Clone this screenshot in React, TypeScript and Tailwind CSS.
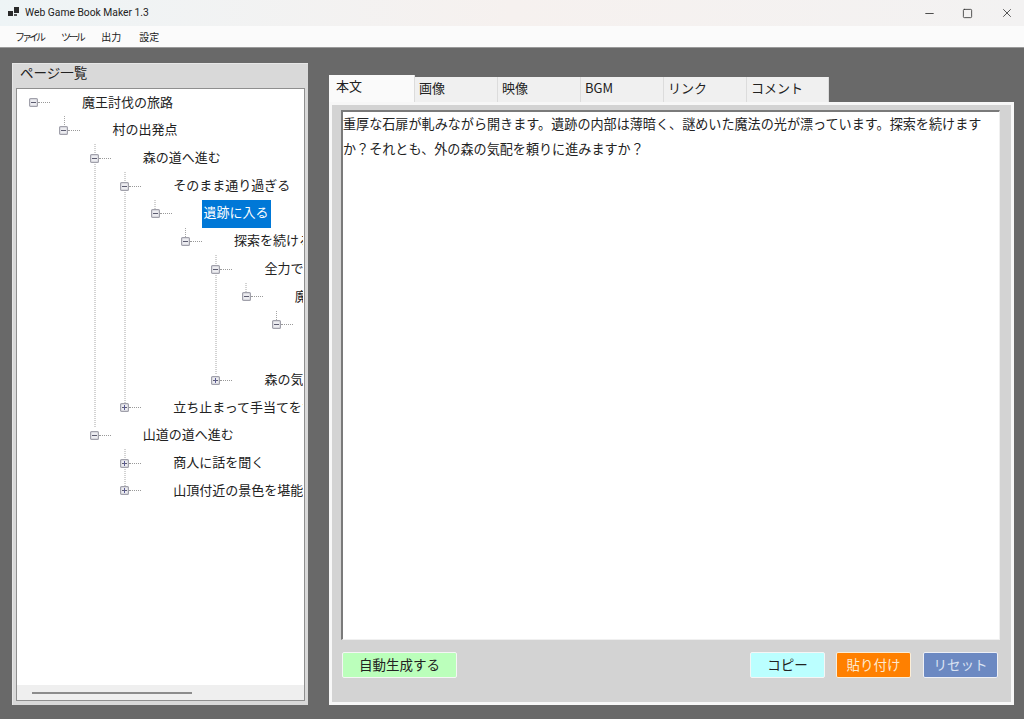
import { Minus, Square, X } from "lucide-react";

const nodes = [
  { level: 0, label: "魔王討伐の旅路", open: true },
  { level: 1, label: "村の出発点", open: true },
  { level: 2, label: "森の道へ進む", open: true },
  { level: 3, label: "そのまま通り過ぎる", open: true },
  { level: 4, label: "遺跡に入る", open: true, selected: true },
  { level: 5, label: "探索を続ける", open: true },
  { level: 6, label: "全力で走る", open: true },
  { level: 7, label: "魔法の扉", open: true },
  { level: 8, label: "", open: true },
  { level: 9, label: "", open: false, leaf: true },
  { level: 6, label: "森の気配を頼る", open: false },
  { level: 3, label: "立ち止まって手当てをする", open: false },
  { level: 2, label: "山道の道へ進む", open: true },
  { level: 3, label: "商人に話を聞く", open: false },
  { level: 3, label: "山頂付近の景色を堪能する", open: false },
];

// tree connector segments: x, y1, y2 relative to the tree box
const guides = [
  [47.5, 27, 37],
  [78, 55, 338],
  [108, 83, 315],
  [138, 111, 121],
  [168.5, 139, 149],
  [199, 166, 286],
  [229, 194, 203],
  [259.5, 222, 232],
  [108, 360, 398],
];

const tabs = ["本文", "画像", "映像", "BGM", "リンク", "コメント"];

function Expander({ open }: { open: boolean }) {
  return (
    <svg width="9" height="9" viewBox="0 0 9 9" className="-ml-px shrink-0">
      <rect x="0.6" y="0.6" width="7.8" height="7.8" rx="1" fill="#ececf0" stroke="#a0a0aa" strokeWidth="1.2" />
      <path d="M2 4.5h5" stroke="#5c5c70" />
      {!open && <path d="M4.5 2v5" stroke="#5c5c98" />}
    </svg>
  );
}

function TreeRow({ level, label, open, selected, leaf }: { level: number; label: string; open: boolean; selected?: boolean; leaf?: boolean }) {
  return (
    <div className="flex h-[27.73px] items-center whitespace-nowrap" style={{ paddingLeft: 13 + level * 30.4 }}>
      {!leaf && <Expander open={open} />}
      {!leaf && <div className="w-3 shrink-0 border-t border-dotted border-[#999]" />}
      <div className={`ml-[30px] flex h-full items-center px-[2px] pb-[3px] ${selected ? "bg-[#0078d7] text-white" : "text-[#222]"}`}>{label}</div>
    </div>
  );
}

function ActionButton({ label, className }: { label: string; className: string }) {
  return <button className={`h-[26px] rounded-[2px] border-[1.5px] pb-[2px] text-[13.5px] ${className}`}>{label}</button>;
}

export default function App() {
  return (
    <div className="flex h-[719px] w-[1024px] flex-col overflow-hidden bg-[#696969] font-['Noto_Sans_CJK_JP','Noto_Sans',sans-serif]">
      <div className="flex h-[26px] items-center bg-gradient-to-r from-[#eef4f6] via-[#f6f1ef] to-[#f3f2f2] pl-[8px]">
        <svg width="11" height="10" viewBox="0 0 11 10" className="mr-[6px] mb-[2px]">
          <path d="M0 4h5v5H0zM6 0h5v6H6z" fill="#2a2a2a" />
          <path d="M6 7h3v2H6z" fill="#555" />
        </svg>
        <span className="font-['Roboto',sans-serif] text-[10.3px] text-[#222]">Web Game Book Maker 1.3</span>
        <div className="ml-auto flex items-center text-[#333]">
          <Minus size={13} strokeWidth={1.6} className="mr-[26px]" />
          <Square size={11} strokeWidth={1.8} className="mr-[27.5px]" />
          <X size={14} strokeWidth={1.4} className="mr-[10px]" />
        </div>
      </div>
      <div className="flex h-[22px] items-center gap-[18px] border-b border-[#9a9a9a] bg-[#fbfbfb] pl-[15px] text-[10px] text-[#222]">
        <span className="tracking-[-3px]">ファイル</span>
        <span className="tracking-[-2.6px]">ツール</span>
        <span>出力</span>
        <span>設定</span>
      </div>
      <div className="flex flex-1 items-start gap-[21px] pl-[12px] pt-[15px]">
        <div className="flex h-[642px] w-[296px] flex-col border-t border-l border-[#e6e6e6] bg-[#d9d9d9] pb-[4px] pl-[3px] pr-[3px]">
          <div className="h-[24px] pl-[4px] text-[13.5px] leading-[16px] text-[#222]">ページ一覧</div>
          <div className="relative flex flex-1 flex-col overflow-hidden border border-[#8f8f8f] bg-white text-[13px]">
            <svg width="287" height="420" className="pointer-events-none absolute left-0 top-0">
              {guides.map(([x, y1, y2], i) => (
                <line key={i} x1={x} x2={x} y1={y1} y2={y2} stroke="#a6a6a6" strokeDasharray="1 1" />
              ))}
            </svg>
            <div className="relative mr-[1px] flex-1 overflow-hidden">
              {nodes.map((node, i) => (
                <TreeRow key={i} {...node} />
              ))}
            </div>
            <div className="flex h-[15px] items-center bg-[#efefef] pl-[15px]">
              <div className="h-[2px] w-[160px] bg-[#8c8c8c]" />
            </div>
          </div>
        </div>
        <div className="flex w-[685px] flex-col pt-[12px]">
          <div className="flex h-[27px] items-end text-[13px] text-[#222]">
            {tabs.map((tab, i) => (
              <div
                key={tab}
                className={
                  i === 0
                    ? "h-[27px] w-[86px] border-r border-[#dcdcdc] bg-[#fafafa] pl-[7px] pt-[1px]"
                    : "h-[25px] w-[83px] border-r border-[#dcdcdc] bg-[#f0f0f0] pl-[4px] pt-[1px] last:w-[82px]"
                }
              >
                {tab}
              </div>
            ))}
          </div>
          <div className="flex h-[603px] flex-col border-[3px] border-[#f7f7f7] bg-[#d3d3d3] pl-[9px] pr-[11px] pt-[5px]">
            <div className="h-[530px] border-t-2 border-l-2 border-b border-r border-[#7a7a7a] border-r-[#f0f0f0] border-b-[#f0f0f0] bg-white pr-[6px] text-[13.1px] leading-[25px] text-[#222]">
              <div className="-mt-px">重厚な石扉が軋みながら開きます。遺跡の内部は薄暗く、謎めいた魔法の光が漂っています。探索を続けますか？それとも、外の森の気配を頼りに進みますか？</div>
            </div>
            <div className="mt-[12px] flex pl-[1px] pr-[2px]">
              <ActionButton label="自動生成する" className="w-[115px] border-[#f5f5f5] bg-[#bbffbb] text-[#222]" />
              <div className="ml-auto flex">
                <ActionButton label="コピー" className="w-[75px] border-[#f5f5f5] bg-[#bbffff] text-[#222]" />
                <ActionButton label="貼り付け" className="ml-[11px] mr-[12px] w-[75px] border-[#fbeed8] bg-[#ff8000] text-[#fde9d0]" />
                <ActionButton label="リセット" className="w-[75px] border-[#eef0f6] bg-[#6c89c2] text-[#dbe3f2]" />
              </div>
            </div>
          </div>
        </div>
      </div>
    </div>
  );
}
